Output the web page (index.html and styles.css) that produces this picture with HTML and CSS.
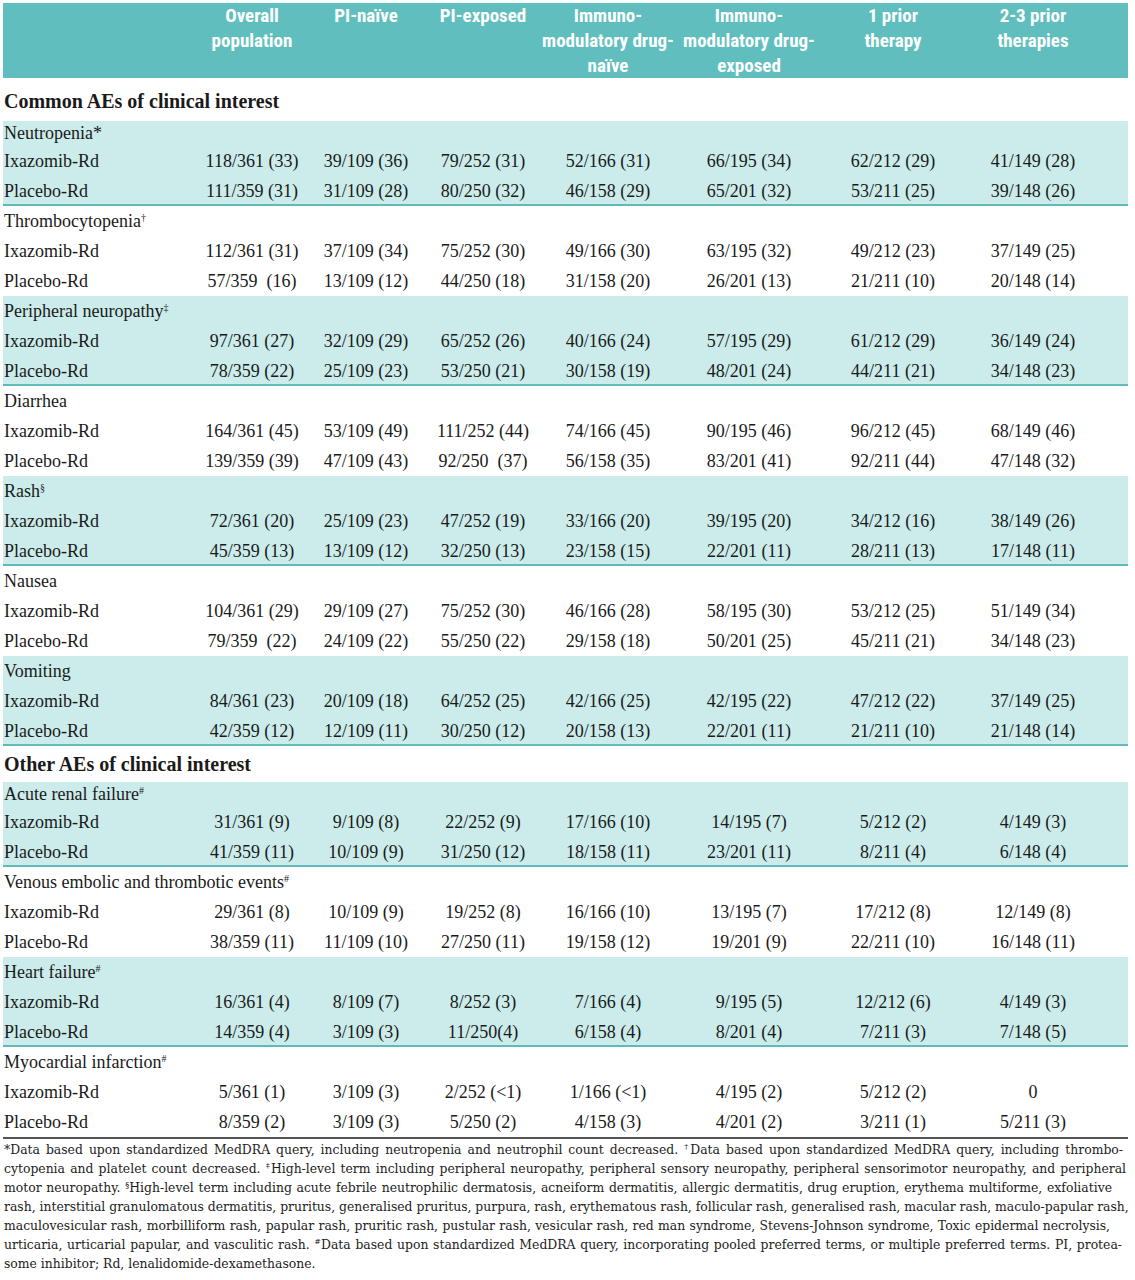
FILE: index.html
```html
<!DOCTYPE html>
<html lang="en">
<head>
<meta charset="utf-8">
<title>AEs of clinical interest</title>
<link rel="stylesheet" href="styles.css">
</head>
<body>
<div class="table">
  <div class="row head">
    <div></div>
    <div>Overall<br>population</div>
    <div>PI-naïve</div>
    <div>PI-exposed</div>
    <div>Immuno-<br>modulatory drug-<br>naïve</div>
    <div>Immuno-<br>modulatory drug-<br>exposed</div>
    <div>1 prior<br>therapy</div>
    <div>2-3 prior<br>therapies</div>
    <div></div>
  </div>

  <div class="sec sec-first">Common AEs of clinical interest</div>

  <div class="grp shade first">
    <div class="ttl">Neutropenia*</div>
    <div class="row"><div class="lbl">Ixazomib-Rd</div><div>118/361 (33)</div><div>39/109 (36)</div><div>79/252 (31)</div><div>52/166 (31)</div><div>66/195 (34)</div><div>62/212 (29)</div><div>41/149 (28)</div></div>
    <div class="row"><div class="lbl">Placebo-Rd</div><div>111/359 (31)</div><div>31/109 (28)</div><div>80/250 (32)</div><div>46/158 (29)</div><div>65/201 (32)</div><div>53/211 (25)</div><div>39/148 (26)</div></div>
  </div>

  <div class="grp">
    <div class="ttl">Thrombocytopenia<sup>†</sup></div>
    <div class="row"><div class="lbl">Ixazomib-Rd</div><div>112/361 (31)</div><div>37/109 (34)</div><div>75/252 (30)</div><div>49/166 (30)</div><div>63/195 (32)</div><div>49/212 (23)</div><div>37/149 (25)</div></div>
    <div class="row"><div class="lbl">Placebo-Rd</div><div>57/359&nbsp; (16)</div><div>13/109 (12)</div><div>44/250 (18)</div><div>31/158 (20)</div><div>26/201 (13)</div><div>21/211 (10)</div><div>20/148 (14)</div></div>
  </div>

  <div class="grp shade">
    <div class="ttl">Peripheral neuropathy<sup>‡</sup></div>
    <div class="row"><div class="lbl">Ixazomib-Rd</div><div>97/361 (27)</div><div>32/109 (29)</div><div>65/252 (26)</div><div>40/166 (24)</div><div>57/195 (29)</div><div>61/212 (29)</div><div>36/149 (24)</div></div>
    <div class="row"><div class="lbl">Placebo-Rd</div><div>78/359 (22)</div><div>25/109 (23)</div><div>53/250 (21)</div><div>30/158 (19)</div><div>48/201 (24)</div><div>44/211 (21)</div><div>34/148 (23)</div></div>
  </div>

  <div class="grp">
    <div class="ttl">Diarrhea</div>
    <div class="row"><div class="lbl">Ixazomib-Rd</div><div>164/361 (45)</div><div>53/109 (49)</div><div>111/252 (44)</div><div>74/166 (45)</div><div>90/195 (46)</div><div>96/212 (45)</div><div>68/149 (46)</div></div>
    <div class="row"><div class="lbl">Placebo-Rd</div><div>139/359 (39)</div><div>47/109 (43)</div><div>92/250&nbsp; (37)</div><div>56/158 (35)</div><div>83/201 (41)</div><div>92/211 (44)</div><div>47/148 (32)</div></div>
  </div>

  <div class="grp shade">
    <div class="ttl">Rash<sup>§</sup></div>
    <div class="row"><div class="lbl">Ixazomib-Rd</div><div>72/361 (20)</div><div>25/109 (23)</div><div>47/252 (19)</div><div>33/166 (20)</div><div>39/195 (20)</div><div>34/212 (16)</div><div>38/149 (26)</div></div>
    <div class="row"><div class="lbl">Placebo-Rd</div><div>45/359 (13)</div><div>13/109 (12)</div><div>32/250 (13)</div><div>23/158 (15)</div><div>22/201 (11)</div><div>28/211 (13)</div><div>17/148 (11)</div></div>
  </div>

  <div class="grp">
    <div class="ttl">Nausea</div>
    <div class="row"><div class="lbl">Ixazomib-Rd</div><div>104/361 (29)</div><div>29/109 (27)</div><div>75/252 (30)</div><div>46/166 (28)</div><div>58/195 (30)</div><div>53/212 (25)</div><div>51/149 (34)</div></div>
    <div class="row"><div class="lbl">Placebo-Rd</div><div>79/359&nbsp; (22)</div><div>24/109 (22)</div><div>55/250 (22)</div><div>29/158 (18)</div><div>50/201 (25)</div><div>45/211 (21)</div><div>34/148 (23)</div></div>
  </div>

  <div class="grp shade">
    <div class="ttl">Vomiting</div>
    <div class="row"><div class="lbl">Ixazomib-Rd</div><div>84/361 (23)</div><div>20/109 (18)</div><div>64/252 (25)</div><div>42/166 (25)</div><div>42/195 (22)</div><div>47/212 (22)</div><div>37/149 (25)</div></div>
    <div class="row"><div class="lbl">Placebo-Rd</div><div>42/359 (12)</div><div>12/109 (11)</div><div>30/250 (12)</div><div>20/158 (13)</div><div>22/201 (11)</div><div>21/211 (10)</div><div>21/148 (14)</div></div>
  </div>

  <div class="sec">Other AEs of clinical interest</div>

  <div class="grp shade first">
    <div class="ttl">Acute renal failure<sup>#</sup></div>
    <div class="row"><div class="lbl">Ixazomib-Rd</div><div>31/361 (9)</div><div>9/109 (8)</div><div>22/252 (9)</div><div>17/166 (10)</div><div>14/195 (7)</div><div>5/212 (2)</div><div>4/149 (3)</div></div>
    <div class="row"><div class="lbl">Placebo-Rd</div><div>41/359 (11)</div><div>10/109 (9)</div><div>31/250 (12)</div><div>18/158 (11)</div><div>23/201 (11)</div><div>8/211 (4)</div><div>6/148 (4)</div></div>
  </div>

  <div class="grp">
    <div class="ttl">Venous embolic and thrombotic events<sup>#</sup></div>
    <div class="row"><div class="lbl">Ixazomib-Rd</div><div>29/361 (8)</div><div>10/109 (9)</div><div>19/252 (8)</div><div>16/166 (10)</div><div>13/195 (7)</div><div>17/212 (8)</div><div>12/149 (8)</div></div>
    <div class="row"><div class="lbl">Placebo-Rd</div><div>38/359 (11)</div><div>11/109 (10)</div><div>27/250 (11)</div><div>19/158 (12)</div><div>19/201 (9)</div><div>22/211 (10)</div><div>16/148 (11)</div></div>
  </div>

  <div class="grp shade">
    <div class="ttl">Heart failure<sup>#</sup></div>
    <div class="row"><div class="lbl">Ixazomib-Rd</div><div>16/361 (4)</div><div>8/109 (7)</div><div>8/252 (3)</div><div>7/166 (4)</div><div>9/195 (5)</div><div>12/212 (6)</div><div>4/149 (3)</div></div>
    <div class="row"><div class="lbl">Placebo-Rd</div><div>14/359 (4)</div><div>3/109 (3)</div><div>11/250(4)</div><div>6/158 (4)</div><div>8/201 (4)</div><div>7/211 (3)</div><div>7/148 (5)</div></div>
  </div>

  <div class="grp last">
    <div class="ttl">Myocardial infarction<sup>#</sup></div>
    <div class="row"><div class="lbl">Ixazomib-Rd</div><div>5/361 (1)</div><div>3/109 (3)</div><div>2/252 (&lt;1)</div><div>1/166 (&lt;1)</div><div>4/195 (2)</div><div>5/212 (2)</div><div>0</div></div>
    <div class="row"><div class="lbl">Placebo-Rd</div><div>8/359 (2)</div><div>3/109 (3)</div><div>5/250 (2)</div><div>4/158 (3)</div><div>4/201 (2)</div><div>3/211 (1)</div><div>5/211 (3)</div></div>
  </div>

  <div class="notes">
    <div class="line j w1">*Data based upon standardized MedDRA query, including neutropenia and neutrophil count decreased. <sup>†</sup>Data based upon standardized MedDRA query, including thrombo-</div>
    <div class="line j w2">cytopenia and platelet count decreased. <sup>‡</sup>High-level term including peripheral neuropathy, peripheral sensory neuropathy, peripheral sensorimotor neuropathy, and peripheral</div>
    <div class="line j w3">motor neuropathy. <sup>§</sup>High-level term including acute febrile neutrophilic dermatosis, acneiform dermatitis, allergic dermatitis, drug eruption, erythema multiforme, exfoliative</div>
    <div class="line">rash, interstitial granulomatous dermatitis, pruritus, generalised pruritus, purpura, rash, erythematous rash, follicular rash, generalised rash, macular rash, maculo-papular rash,</div>
    <div class="line j w5">maculovesicular rash, morbilliform rash, papular rash, pruritic rash, pustular rash, vesicular rash, red man syndrome, Stevens-Johnson syndrome, Toxic epidermal necrolysis,</div>
    <div class="line j w6">urticaria, urticarial papular, and vasculitic rash. <sup>#</sup>Data based upon standardized MedDRA query, incorporating pooled preferred terms, or multiple preferred terms. PI, protea-</div>
    <div class="line">some inhibitor; Rd, lenalidomide-dexamethasone.</div>
  </div>
</div>
</body>
</html>
```

FILE: styles.css
```css
* { box-sizing: border-box; }

body {
  margin: 3px;
  background: #ffffff;
  color: #1a1a1a;
  font-family: "Liberation Serif", "Times New Roman", serif;
}

.table {
  width: 1125px;
}

.row {
  display: grid;
  grid-template-columns: 197px 104px 124px 110px 140px 142px 146px 134px 28px;
  height: 30px;
  line-height: 30px;
  font-size: 18px;
  text-align: center;
  white-space: nowrap;
}

.row .lbl {
  text-align: left;
  padding-left: 1px;
}

.head {
  height: 75px;
  background: #60bfbe;
  color: #ffffff;
  font-family: "Liberation Sans Narrow", "Roboto Condensed", "DejaVu Sans Condensed", "Liberation Sans", sans-serif;
  font-weight: bold;
  font-size: 19px;
  line-height: 25px;
}

.sec {
  height: 36px;
  line-height: 36px;
  font-size: 20px;
  font-weight: bold;
  padding-left: 1px;
}

.sec-first {
  height: 43px;
  padding-top: 3px;
  line-height: 40px;
}

.grp {
  height: 90px;
}

.grp.first {
  height: 85px;
}

.grp.shade {
  background: #cbecea;
  border-bottom: 2px solid #5fbab9;
}

.grp.last {
  border-bottom: 2px solid #555555;
  height: 92px;
}

.ttl {
  height: 30px;
  line-height: 30px;
  font-size: 18px;
  padding-left: 1px;
  white-space: nowrap;
}

.grp.first .ttl {
  height: 25px;
  line-height: 25px;
}

.ttl sup {
  font-size: 10px;
  line-height: 0;
  vertical-align: 6px;
}

.notes {
  padding-left: 1px;
  padding-top: 1px;
  font-family: "DejaVu Serif", "Liberation Serif", serif;
  font-size: 12.4px;
  line-height: 19px;
  color: #222222;
}

.notes .line {
  white-space: nowrap;
  height: 19px;
}

.notes .j {
  white-space: normal;
  text-align: justify;
  text-align-last: justify;
}

.notes .w1 { width: 1119px; }
.notes .w2 { width: 1122px; }
.notes .w3 { width: 1108px; }
.notes .w5 { width: 1106px; }
.notes .w6 { width: 1118px; }

.notes sup {
  font-size: 8px;
  line-height: 0;
  vertical-align: 5px;
}
```
